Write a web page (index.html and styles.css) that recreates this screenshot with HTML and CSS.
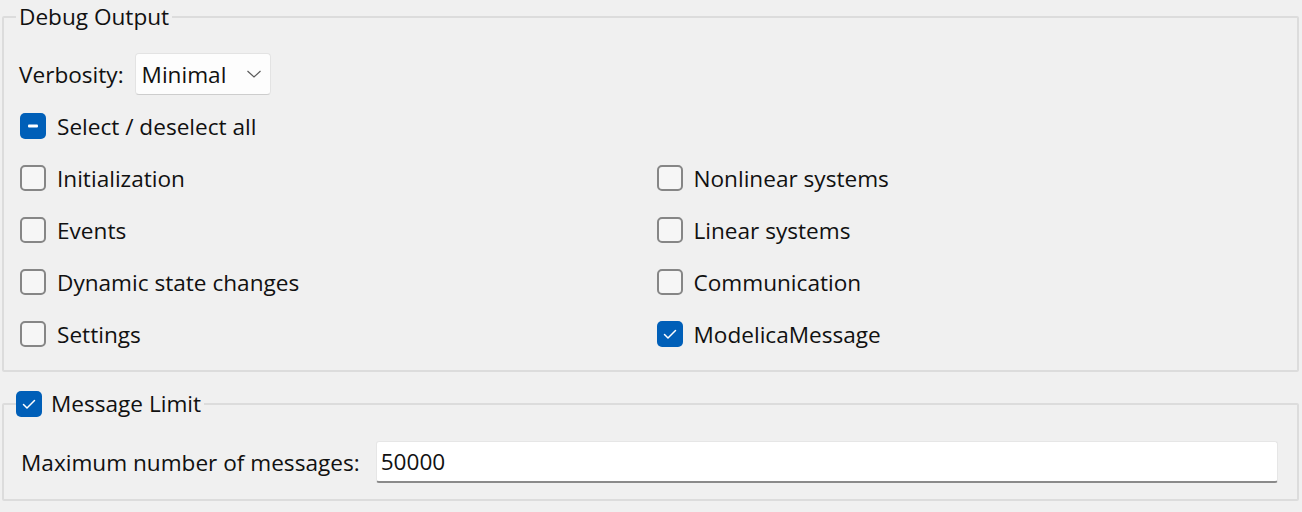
FILE: index.html
```html
<!DOCTYPE html>
<html lang="en">
<head>
<meta charset="utf-8">
<title>Debug Output</title>
<link rel="stylesheet" href="styles.css">
</head>
<body>
<div class="page">
  <fieldset class="group debug">
    <legend class="group-title">Debug Output</legend>
    <div class="row verbosity">
      <span class="label">Verbosity:</span>
      <div class="combo">
        <span class="combo-text">Minimal</span>
        <svg class="chevron" width="16" height="10" viewBox="0 0 16 10"><polyline points="1.5,2 8,8 14.5,2" fill="none" stroke="#5a5a5a" stroke-width="1.2"/></svg>
      </div>
    </div>
    <div class="row check">
      <span class="box on"><svg width="26" height="26" viewBox="0 0 26 26"><rect x="8" y="11.5" width="10" height="3" rx="1" fill="#fff"/></svg></span>
      <span>Select / deselect all</span>
    </div>
    <div class="grid">
      <div class="row check"><span class="box"></span><span>Initialization</span></div>
      <div class="row check"><span class="box"></span><span>Nonlinear systems</span></div>
      <div class="row check"><span class="box"></span><span>Events</span></div>
      <div class="row check"><span class="box"></span><span>Linear systems</span></div>
      <div class="row check"><span class="box"></span><span>Dynamic state changes</span></div>
      <div class="row check"><span class="box"></span><span>Communication</span></div>
      <div class="row check"><span class="box"></span><span>Settings</span></div>
      <div class="row check"><span class="box on"><svg width="26" height="26" viewBox="0 0 26 26"><polyline points="7.5,13.5 11,17 18.5,9.5" fill="none" stroke="#fff" stroke-width="1.5" stroke-linecap="round" stroke-linejoin="round"/></svg></span><span>ModelicaMessage</span></div>
    </div>
  </fieldset>
  <fieldset class="group limit">
    <legend class="group-title with-check">
      <span class="box on"><svg width="26" height="26" viewBox="0 0 26 26"><polyline points="7.5,13.5 11,17 18.5,9.5" fill="none" stroke="#fff" stroke-width="1.5" stroke-linecap="round" stroke-linejoin="round"/></svg></span>
      <span>Message Limit</span>
    </legend>
    <div class="field">
      <span class="field-label">Maximum number of messages:</span>
      <div class="input">50000</div>
    </div>
  </fieldset>
</div>
</body>
</html>
```

FILE: styles.css
```css
html, body {
  margin: 0;
  padding: 0;
  background: #f0f0f0;
}
body {
  font-family: "Open Sans", "Noto Sans", sans-serif;
  font-size: 22.6px;
  color: #111111;
}
.page {
  display: flex;
  flex-direction: column;
  padding: 0 3px 0 2px;
}
.group {
  margin: 0;
  min-width: 0;
  border: 2px solid #dcdcdc;
  border-radius: 2px;
}
.debug {
  padding: 14px 4px 10px 16px;
}
.limit {
  margin-top: 15px;
  padding: 20px 19px 16px 16px;
}
.group-title {
  margin-left: -4px;
  padding: 0 3px;
  line-height: 34px;
  height: 34px;
}
.with-check {
  display: flex;
  align-items: center;
  gap: 9px;
  padding: 0 3px 0 0;
}
.row {
  display: flex;
  align-items: center;
  height: 52px;
}
.verbosity {
  gap: 11px;
}
.verbosity .label {
  margin-left: -1px;
}
.combo {
  box-sizing: border-box;
  width: 136px;
  height: 42px;
  display: flex;
  align-items: center;
  justify-content: space-between;
  padding: 0 8px 0 6px;
  background: #fdfdfd;
  border: 1px solid #e3e3e3;
  border-bottom-color: #cdcdcd;
  border-radius: 4px;
}
.chevron {
  display: block;
}
.check {
  gap: 11px;
}
.box {
  box-sizing: border-box;
  width: 26px;
  height: 26px;
  flex: none;
  border: 2px solid #868686;
  border-radius: 5px;
  background: #f6f6f6;
}
.box.on {
  border: none;
  background: #005fb8;
}
.box svg {
  display: block;
}
.grid {
  display: grid;
  grid-template-columns: 1fr 1fr;
}
.field {
  display: flex;
  align-items: center;
  gap: 16px;
}
.field-label {
  margin-left: 1px;
}
.input {
  box-sizing: border-box;
  flex: 1;
  height: 42px;
  display: flex;
  align-items: center;
  padding-left: 4px;
  background: #ffffff;
  border: 1px solid #e6e6e6;
  border-bottom: 2px solid #8a8a8a;
  border-radius: 3px;
}
```
